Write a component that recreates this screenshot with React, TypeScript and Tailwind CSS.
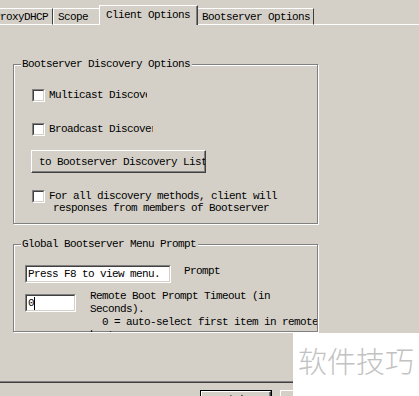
import React from "react";

const Checkbox = () => (
  <div className="w-[13px] h-[13px] shrink-0 flex border border-t-[#808080] border-l-[#808080] border-b-white border-r-white">
    <div className="flex-1 bg-white border border-t-[#404040] border-l-[#404040] border-b-[#d4d0c8] border-r-[#d4d0c8]" />
  </div>
);

const Edit = ({ w, children }: { w: string; children: React.ReactNode }) => (
  <div className={`${w} h-[18px] shrink-0 flex border border-t-[#808080] border-l-[#808080] border-b-white border-r-white`}>
    <div className="flex-1 flex items-center pl-[1px] bg-white border border-t-[#404040] border-l-[#404040] border-b-[#d4d0c8] border-r-[#d4d0c8] whitespace-pre leading-[12px] overflow-hidden">
      {children}
    </div>
  </div>
);

export default function App() {
  return (
    <div className="w-[419px] h-[396px] overflow-hidden relative bg-[#d4d0c8] text-black flex flex-col font-['Liberation_Mono',monospace] text-[11px] tracking-[-0.6px]">
      {/* Tabs */}
      <div className="flex items-end h-[25px] shrink-0">
        <div className="-ml-[12px] w-[65px] h-[17px] shrink-0 flex items-center pl-[6px] border-t border-t-white border-b border-b-white border-r border-r-[#404040] leading-[12px] whitespace-nowrap">
          ProxyDHCP
        </div>
        <div className="w-[46px] h-[17px] shrink-0 flex items-center pl-[4px] border-t border-t-white border-b border-b-white border-l border-l-white leading-[12px] whitespace-nowrap">
          Scope
        </div>
        <div className="w-[99px] h-[20px] shrink-0 flex items-center pl-[6px] pb-[1px] border-t border-t-white border-l border-l-white border-r border-r-[#404040] shadow-[inset_-1px_0_0_#808080] leading-[12px] whitespace-nowrap">
          Client Options
        </div>
        <div className="w-[116px] h-[17px] shrink-0 flex items-center pl-[4px] border-t border-t-white border-b border-b-white border-r border-r-[#404040] leading-[12px] whitespace-nowrap">
          Bootserver Options
        </div>
        <div className="flex-1 h-[1px] bg-white" />
      </div>

      {/* Panel */}
      <div className="h-[358px] shrink-0 flex flex-col pl-[13px] border-b border-b-[#404040] shadow-[inset_0_-1px_0_#808080]">
        {/* Group 1 */}
        <div className="relative mt-[39px] w-[305px] h-[160px] shrink-0 border border-[#808080] shadow-[inset_1px_1px_0_#fff,1px_1px_0_#fff] flex flex-col pl-[18px] pt-[24px]">
          <span className="absolute left-[7px] -top-[7px] pl-[1px] pr-[2px] bg-[#d4d0c8] leading-[12px] whitespace-nowrap">
            Bootserver Discovery Options
          </span>
          <div className="flex items-center h-[13px]">
            <Checkbox />
            <span className="ml-[4px] w-[98px] overflow-hidden whitespace-nowrap leading-[13px]">Multicast Discovery</span>
          </div>
          <div className="flex items-center h-[13px] mt-[21px]">
            <Checkbox />
            <span className="ml-[4px] w-[104px] overflow-hidden whitespace-nowrap leading-[13px]">Broadcast Discovery</span>
          </div>
          <div className="mt-[14px] -ml-[1px] w-[175px] h-[23px] flex items-center pl-[7px] overflow-hidden whitespace-nowrap border border-t-white border-l-white border-b-[#404040] border-r-[#404040] shadow-[inset_-1px_-1px_0_#808080] leading-[12px]">
            to Bootserver Discovery List
          </div>
          <div className="mt-[17px] flex items-start">
            <Checkbox />
            <div className="ml-[4px] leading-[12px] whitespace-pre">
              <div>For all discovery methods, client will</div>
              <div className="pl-[4px]">responses from members of Bootserver</div>
            </div>
          </div>
        </div>

        {/* Group 2 */}
        <div className="relative mt-[20px] w-[305px] h-[88px] shrink-0 border border-[#808080] shadow-[inset_1px_1px_0_#fff,1px_1px_0_#fff] flex flex-col pl-[11px] pt-[20px]">
          <span className="absolute left-[7px] -top-[7px] pl-[1px] pr-[2px] bg-[#d4d0c8] leading-[12px] whitespace-nowrap">
            Global Bootserver Menu Prompt
          </span>
          <div className="flex items-start">
            <Edit w="w-[146px]">Press F8 to view menu.</Edit>
            <span className="ml-[13px] leading-[12px]">Prompt</span>
          </div>
          <div className="flex items-start mt-[11px]">
            <Edit w="w-[51px]">
              <span>0</span>
              <span className="w-[1px] h-[13px] bg-black" />
            </Edit>
            <div className="ml-[14px] -mt-[4px] w-[227px] h-[42px] overflow-hidden leading-[13px] whitespace-pre">
              <div>Remote Boot Prompt Timeout (in</div>
              <div>Seconds).</div>
              <div>  0 = auto-select first item in remote</div>
              <div>boot menu.</div>
            </div>
          </div>
        </div>
      </div>

      {/* Dialog buttons */}
      <div className="flex pt-[7px] pl-[200px] gap-[8px]">
        <div className="w-[72px] h-[23px] shrink-0 border border-black flex">
          <div className="flex-1 flex items-start pt-[1px] justify-center border border-t-white border-l-white border-b-[#404040] border-r-[#404040] shadow-[inset_-1px_-1px_0_#808080] font-['Noto_Sans_CJK_SC',sans-serif] text-[12px] leading-[16px] tracking-normal">
            确定
          </div>
        </div>
        <div className="w-[72px] h-[23px] shrink-0 border border-t-white border-l-white border-b-[#404040] border-r-[#404040]" />
      </div>

      {/* Watermark */}
      <div className="absolute left-[293px] top-[333px] right-0 bottom-0 bg-white pl-[5px] pt-[13px]">
        <span className="block font-['Noto_Sans_CJK_SC',sans-serif] text-[29px] leading-[29px] tracking-normal text-[#c2c2c2] font-light whitespace-nowrap">
          软件技巧
        </span>
      </div>
    </div>
  );
}
